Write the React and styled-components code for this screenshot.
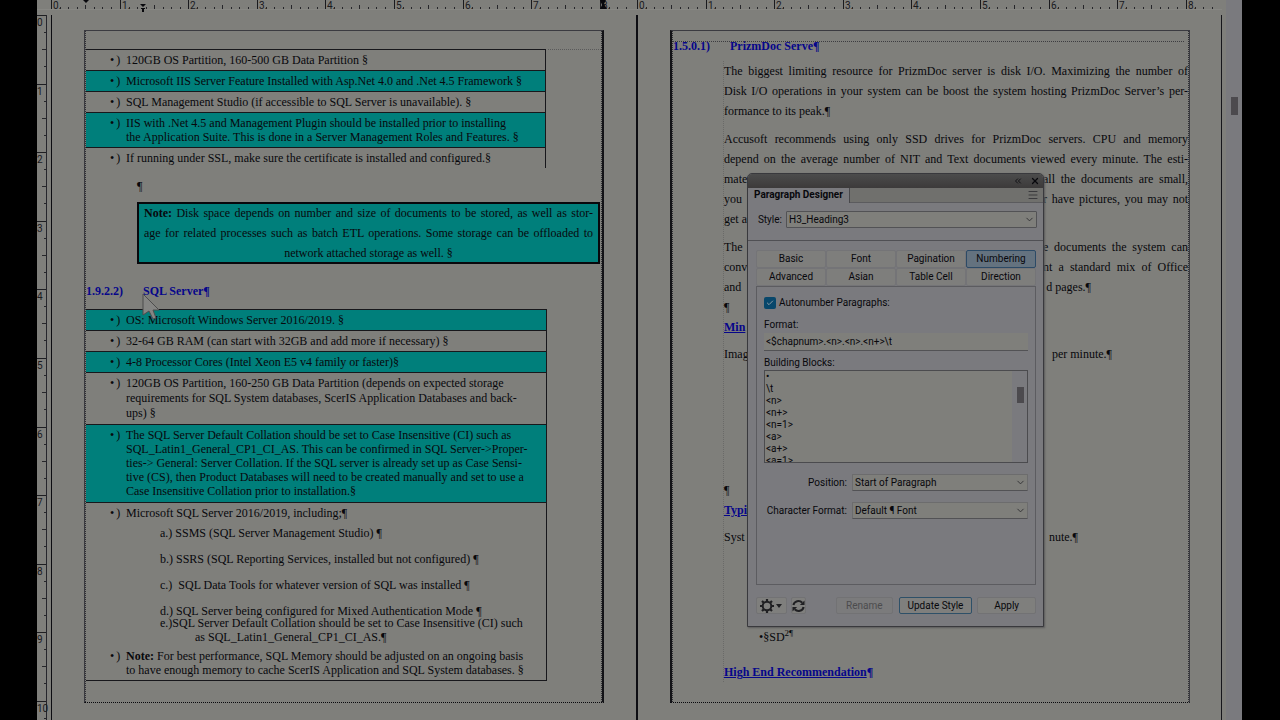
import React from 'react'
import styled, { createGlobalStyle, css } from 'styled-components'
import { ChevronDown, ChevronsLeft, X, Menu, Check } from 'lucide-react'

const ink = '#08080c'
const paper = '#7f7f7b'
const panel = '#7a7a7e'
const teal = '#007f7b'
const link = '#06068a'
const serif = '"Liberation Serif", serif'
const sans = 'Roboto, "Liberation Sans", sans-serif'

const GlobalStyle = createGlobalStyle`
  * {
    box-sizing: border-box;
  }
  body {
    margin: 0;
    background: #000;
    color: ${ink};
    font-family: ${serif};
    font-size: 12px;
  }
  ul, ol, p, h2 {
    margin: 0;
    padding: 0;
    list-style: none;
  }
`

const Workspace = styled.div`
  display: flex;
  height: 100vh;
  margin: 0 38px 0 37px;
  background: ${paper};
  overflow: hidden;
`

const Main = styled.main`
  flex: 1;
  min-width: 0;
  display: flex;
  flex-direction: column;
`

const RulerBar = styled.div`
  display: flex;
  height: 10px;
  margin-bottom: 5px;
  padding-left: 14px;
  border-bottom: 1px solid #878783;
`

const RulerPart = styled.svg`
  flex: 1;
  min-width: 0;
  height: 9px;
  overflow: visible;
  font-family: ${sans};
  font-size: 10px;
`

const Spread = styled.div`
  flex: 1;
  min-height: 0;
  display: flex;
`

const SideRuler = styled.svg`
  flex: none;
  width: 10px;
  height: 100%;
  margin-right: 4px;
  border-right: 1px solid #25252b;
  overflow: visible;
  font-family: ${sans};
  font-size: 10px;
`

const Page = styled.section`
  position: relative;
  flex: 1;
  min-width: 0;
  display: flex;
  flex-direction: column;
  padding: 15px 32px 17px;
  border-left: ${(props) => (props.$second ? 2 : 1)}px solid #0d0d12;

  &:last-child {
    padding-right: 31px;
    border-right: 1px solid #16161b;
  }
`

const Frame = styled.div`
  flex: 1;
  min-height: 0;
  border: 1px solid #3a3a40;
  border-right: ${(props) => (props.$second ? 1 : 2)}px solid
    ${(props) => (props.$second ? '#3a3a40' : '#121216')};
  border-left: ${(props) => (props.$second ? 2 : 1)}px solid
    ${(props) => (props.$second ? '#121216' : '#3a3a40')};
  border-bottom: 1px dotted ${ink};
`

const Flow = styled.div`
  position: relative;
  height: 100%;
  border-left: 1px dotted #303034;
  border-right: 1px dotted #303034;
`

const FirstFlow = styled(Flow)`
  padding-top: 18px;

  &::before {
    content: '';
    position: absolute;
    top: 18px;
    left: 462px;
    right: 0;
    border-top: 1px dotted #5a5a5a;
  }
`

const SecondFlow = styled(Flow)`
  padding-top: 5px;

  &::before {
    content: '';
    position: absolute;
    top: 10px;
    left: 0;
    right: 4px;
    border-top: 1px dotted #3c3c40;
  }
`

const Rows = styled.ul`
  width: 461px;
  border: 1px solid #17171b;
  border-left: 0;
  border-top: 0;
  ${(props) =>
    props.$open &&
    css`
      width: 460px;
      border-bottom: 0;
    `}
`

const Row = styled.li`
  display: flex;
  padding: 3px 0 ${(props) => props.$bottom ?? 3}px 24px;
  border-top: 1px solid #17171b;
  background: ${(props) => (props.$filled ? teal : 'transparent')};
  line-height: ${(props) => props.$leading || 14}px;
  white-space: nowrap;
`

const Bullet = styled.span`
  flex: none;
  display: flex;
  gap: 2px;
  width: 16px;
`

const SubList = styled.ol`
  display: grid;
  gap: 12px;
  margin-top: 6px;
  padding-left: 34px;
`

const LastItem = styled.li`
  margin-top: -14px;
`

const Hanging = styled.span`
  display: block;
  padding-left: 35px;
`

const NoteRow = styled(Row)`
  border-top: 0;
  padding-top: 5px;
`

const EmptyLine = styled.p`
  margin: 8px 0 6px 51px;
  line-height: 20px;
`

const NoteBox = styled.p`
  margin: 0 1px 0 51px;
  padding: 1px 7px;
  background: ${teal};
  box-shadow: inset 0 0 0 2px ${ink};
  line-height: 20px;
  text-align: center;
  white-space: nowrap;
`

const Heading = styled.h2`
  display: flex;
  margin: ${(props) => props.$space || '0'};
  color: ${link};
  font-size: 12px;
  line-height: 20px;
  font-weight: bold;
`

const HeadingNumber = styled.span`
  width: 57px;
`

const Body = styled.div`
  margin-left: 50px;
  border-left: 1px dotted #6a6a68;
  line-height: 20px;
`

const Paragraph = styled.p`
  margin-top: ${(props) => props.$gap || 0}px;
`

const Line = styled.span`
  display: block;
  white-space: nowrap;
  text-align-last: ${(props) => (props.$last ? 'left' : 'justify')};
`

const SplitLine = styled.span`
  display: flex;
  justify-content: space-between;
  margin-right: ${(props) => props.$short || 0}px;
  white-space: nowrap;

  span:last-child {
    ${(props) =>
      !props.$short &&
      css`
        width: 145px;
        text-align-last: justify;
      `}
  }
`

const SubHeading = styled.h2`
  margin-top: ${(props) => props.$gap || 0}px;
  color: ${link};
  font-size: 12px;
  line-height: 20px;

  u {
    text-decoration-thickness: 1px;
  }
`

const Indented = styled(Paragraph)`
  padding-left: 35px;

  sup {
    font-size: 9px;
    line-height: 1;
  }
`

const ScrollTrack = styled.div`
  flex: none;
  width: 16px;
  margin-left: 4px;
  padding: 97px 4px 0 5px;
  background: ${panel};
`

const ScrollThumb = styled.div`
  height: ${(props) => props.$size}px;
  background: #4c4a4e;
`

const Pointer = styled.svg`
  position: absolute;
  left: 90px;
  top: 278px;
  width: 18px;
  height: 28px;
`

const Dialog = styled.form`
  position: absolute;
  left: 109px;
  top: 158px;
  width: 297px;
  background: ${panel};
  border: 1px solid #39393d;
  border-radius: 5px 5px 0 0;
  box-shadow: 1px 1px 2px #5c5c5c;
  font-family: ${sans};
  font-size: 10px;
  line-height: 14px;

  input, select, button {
    font: inherit;
    color: inherit;
  }
`

const TitleBar = styled.div`
  display: flex;
  justify-content: flex-end;
  align-items: center;
  gap: 7px;
  height: 14px;
  padding-right: 3px;
  border-radius: 4px 4px 0 0;
  background: linear-gradient(#4c4c4c, #3c3a3a);
`

const PlainButton = styled.button`
  display: flex;
  padding: 0;
  border: 0;
  background: none;
`

const PanelTabs = styled.div`
  display: flex;
  align-items: center;
  justify-content: space-between;
  height: 15px;
  padding-right: 4px;
  background: #70706d;
  border-bottom: 1px solid #5b5b5e;
`

const PanelTab = styled.strong`
  height: 15px;
  padding: 0 6px;
  border-right: 1px solid #48484b;
  background: ${panel};
  line-height: 13px;
`

const StyleRow = styled.div`
  display: grid;
  grid-template-columns: 34px 1fr;
  align-items: center;
  gap: 4px;
  padding: 8px 6px 12px 0;
  border-bottom: 1px solid #505054;

  label {
    text-align: right;
  }
`

const SelectBox = styled.span`
  position: relative;
  display: block;

  select {
    display: block;
    width: 100%;
    height: 17px;
    padding: 0 2px;
    appearance: none;
    border: 1px solid ${(props) => (props.$strong ? '#525255' : '#6c6c6d')};
    border-bottom-color: #525255;
    border-radius: 1px;
    background: ${paper};
  }

  svg {
    position: absolute;
    right: 2px;
    top: 3px;
    color: #303033;
  }
`

const Content = styled.div`
  padding: 9px 7px 12px 8px;
`

const Tabs = styled.div`
  display: grid;
  grid-template-columns: repeat(4, 1fr);
`

const Tab = styled.button`
  height: 18px;
  padding: 0;
  border: 1px solid #747477;
  border-radius: 2px;
  background: ${(props) => (props.$active ? '#64727f' : '#7e7e7c')};
  ${(props) => props.$active && 'border-color: #2c4a66;'}
`

const Sheet = styled.div`
  display: flex;
  flex-direction: column;
  height: 299px;
  padding: 9px 7px 0;
  border: 1px solid #5c5c60;
`

const CheckLabel = styled.label`
  display: flex;
  align-items: center;
  gap: 3px;
`

const CheckHolder = styled.span`
  position: relative;
  display: flex;

  input {
    width: 12px;
    height: 12px;
    margin: 0;
    appearance: none;
    border-radius: 2px;
    background: #08476b;
  }

  svg {
    position: absolute;
    left: 2px;
    top: 2px;
    color: #8c9aa3;
  }
`

const FieldLabel = styled.label`
  margin-top: ${(props) => props.$gap}px;
`

const TextInput = styled.input`
  height: 18px;
  margin-top: 1px;
  padding: 0 2px;
  border: 0;
  border-bottom: 1px solid #525255;
  background: ${paper};
`

const ListBox = styled.div`
  display: flex;
  height: 93px;
  border: 1px solid #4b4b4e;
  background: ${paper};
  overflow: hidden;

  ul {
    flex: 1;
    padding-left: 1px;
    line-height: 12px;
  }
`

const ListTrack = styled.div`
  width: 15px;
  padding: 16px 3px 0 5px;
  background: ${panel};
`

const Fields = styled.div`
  display: grid;
  grid-template-columns: 83px 1fr;
  gap: 11px 5px;
  align-items: center;
  margin-top: 11px;

  label {
    text-align: right;
    white-space: nowrap;
  }
`

const Footer = styled.div`
  display: flex;
  align-items: center;
  padding-top: 12px;
`

const Button = styled.button`
  display: flex;
  justify-content: center;
  align-items: center;
  width: ${(props) => props.$width}px;
  height: 17px;
  margin-left: ${(props) => props.$gap || 0}px;
  padding: 0;
  border: 1px solid ${(props) => (props.$primary ? '#2e5068' : '#727274')};
  border-radius: 2px;
  background: ${(props) => (props.disabled ? '#7b7b7c' : '#7f7f7d')};

  && {
    color: ${(props) => (props.disabled ? '#4c4c4e' : ink)};
  }
`

const INCH = 68.6
const inches = [0, 1, 2, 3, 4, 5, 6, 7, 8, 9, 10]
const eighths = [1, 2, 3, 4, 5, 6, 7]

function TopRuler({ markers }) {
  return (
    <RulerPart aria-hidden="true">
      {inches.slice(0, 9).map((n) => {
        const x = Math.round(n * INCH)
        const ticks = n === 8 ? eighths.slice(0, 3) : eighths
        return (
          <g key={n}>
            <rect x={x} y="0" width="1" height="9" fill="#1a1a1e" />
            <text x={x + 2} y="9" fill="#1a1a1e">
              {n}.
            </text>
            {ticks.map((e) => (
              <rect
                key={e}
                x={Math.round(x + (e * INCH) / 8)}
                y={e === 4 ? 5 : 7}
                width="1"
                height={e === 4 ? 4 : 2}
                fill="#26262a"
              />
            ))}
          </g>
        )
      })}
      {markers && (
        <g fill={ink}>
          <path d="M32 0h6l-3 3z" />
          <path d="M89 4h6l-3 3zM90 8h4v1h-1v3h-2v-3h-1z" />
          <path d="M549 0h6l-2 4 3 5h-7l2-4z" />
        </g>
      )}
    </RulerPart>
  )
}

function LeftRuler() {
  return (
    <SideRuler aria-hidden="true">
      {inches.map((n) => {
        const y = Math.round(n * INCH)
        return (
          <g key={n}>
            <rect x="0" y={y} width="9" height="1" fill="#1e1e22" />
            <text x="0" y={y + 11} fill="#1a1a1e">
              {n}
            </text>
            {[1, 2, 3].map((q) => (
              <rect
                key={q}
                x={q === 2 ? 5 : 7}
                y={Math.round(y + (q * INCH) / 4)}
                width={q === 2 ? 4 : 2}
                height="1"
                fill="#26262a"
              />
            ))}
          </g>
        )
      })}
    </SideRuler>
  )
}

function Marker() {
  return (
    <Bullet>
      <span>•</span>
      <span>)</span>
    </Bullet>
  )
}

function BulletRow({ lines, ...rest }) {
  return (
    <Row {...rest}>
      <Marker />
      <span>
        {lines.map((line) => (
          <div key={line}>{line}</div>
        ))}
      </span>
    </Row>
  )
}

function Dropdown({ id, value, strong }) {
  return (
    <SelectBox $strong={strong}>
      <select id={id} defaultValue={value}>
        <option>{value}</option>
      </select>
      <ChevronDown size={11} strokeWidth={2} />
    </SelectBox>
  )
}

function GearIcon() {
  return (
    <svg width="16" height="16" viewBox="0 0 16 16">
      <g stroke="#202023" fill="none">
        <circle cx="8" cy="8" r="4.3" strokeWidth="2" />
        <path
          d="M8 1v2.500M8 12.500V15M1 8h2.500M12.500 8H15M3 3l1.800 1.800M11.200 11.200 13 13M13 3l-1.800 1.800M4.800 11.200 3 13"
          strokeWidth="2.200"
        />
      </g>
    </svg>
  )
}

function RefreshIcon() {
  return (
    <svg width="14" height="14" viewBox="0 0 14 14">
      <g fill="none" stroke="#202023" strokeWidth="2.200">
        <path d="M1.500 6A5.500 5.500 0 0 1 11 3.500" />
        <path d="M12.500 8A5.500 5.500 0 0 1 3 10.500" />
      </g>
      <path d="M13.500 1v5h-5zM.5 13V8h5z" fill="#202023" />
    </svg>
  )
}

const tabs = [
  'Basic',
  'Font',
  'Pagination',
  'Numbering',
  'Advanced',
  'Asian',
  'Table Cell',
  'Direction',
]
const blocks = ['•', '\\t', '<n>', '<n+>', '<n=1>', '<a>', '<a+>', '<a=1>']

function ParagraphDesigner() {
  return (
    <Dialog>
      <TitleBar>
        <PlainButton type="button" aria-label="Collapse">
          <ChevronsLeft size={10} />
        </PlainButton>
        <PlainButton type="button" aria-label="Close">
          <X size={10} strokeWidth={3} />
        </PlainButton>
      </TitleBar>
      <PanelTabs>
        <PanelTab>Paragraph Designer</PanelTab>
        <PlainButton type="button" aria-label="Menu">
          <Menu size={12} color="#3a3a3d" />
        </PlainButton>
      </PanelTabs>
      <StyleRow>
        <label htmlFor="style">Style:</label>
        <Dropdown id="style" value="H3_Heading3" strong />
      </StyleRow>
      <Content>
        <Tabs>
          {tabs.map((tab) => (
            <Tab key={tab} type="button" $active={tab === 'Numbering'}>
              {tab}
            </Tab>
          ))}
        </Tabs>
        <Sheet>
          <CheckLabel>
            <CheckHolder>
              <input type="checkbox" defaultChecked />
              <Check size={8} strokeWidth={3} />
            </CheckHolder>
            Autonumber Paragraphs:
          </CheckLabel>
          <FieldLabel htmlFor="format" $gap={8}>
            Format:
          </FieldLabel>
          <TextInput id="format" defaultValue="<$chapnum>.<n>.<n>.<n+>\t" />
          <FieldLabel as="span" id="blocks" $gap={5}>
            Building Blocks:
          </FieldLabel>
          <ListBox>
            <ul role="listbox" aria-labelledby="blocks">
              {blocks.map((block) => (
                <li key={block} role="option" aria-selected="false">
                  {block}
                </li>
              ))}
            </ul>
            <ListTrack>
              <ScrollThumb $size={16} />
            </ListTrack>
          </ListBox>
          <Fields>
            <label htmlFor="position">Position:</label>
            <Dropdown id="position" value="Start of Paragraph" />
            <label htmlFor="charformat">Character Format:</label>
            <Dropdown id="charformat" value="Default ¶ Font" />
          </Fields>
        </Sheet>
        <Footer>
          <Button type="button" $width={31} aria-label="Options">
            <GearIcon />
            <svg width="8" height="5" viewBox="0 0 8 5">
              <path d="M1 1h6L4 5z" fill="#202023" />
            </svg>
          </Button>
          <Button type="button" $width={15} $gap={4} aria-label="Refresh">
            <RefreshIcon />
          </Button>
          <Button type="button" $width={57} $gap={30} disabled>
            Rename
          </Button>
          <Button type="button" $width={74} $gap={6} $primary>
            Update Style
          </Button>
          <Button type="button" $width={59} $gap={5}>
            Apply
          </Button>
        </Footer>
      </Content>
    </Dialog>
  )
}

function FirstPage() {
  return (
    <Page>
      <Frame>
        <FirstFlow>
          <Rows $open>
            <BulletRow lines={['120GB OS Partition, 160-500 GB Data Partition §']} />
            <BulletRow
              $filled
              lines={[
                'Microsoft IIS Server Feature Installed with Asp.Net 4.0 and .Net 4.5 Framework §',
              ]}
            />
            <BulletRow
              lines={['SQL Management Studio (if accessible to SQL Server is unavailable). §']}
            />
            <BulletRow
              $filled
              lines={[
                'IIS with .Net 4.5 and Management Plugin should be installed prior to installing',
                'the Application Suite. This is done in a Server Management Roles and Features. §',
              ]}
            />
            <BulletRow
              lines={[
                'If running under SSL, make sure the certificate is installed and configured.§',
              ]}
            />
          </Rows>
          <EmptyLine>¶</EmptyLine>
          <NoteBox>
            <Line>
              <b>Note:</b> Disk space depends on number and size of documents to be stored, as
              well as stor-
            </Line>
            <Line>
              age for related processes such as batch ETL operations. Some storage can be
              offloaded to
            </Line>
            network attached storage as well. §
          </NoteBox>
          <Heading $space="17px 0 8px">
            <HeadingNumber>1.9.2.2)</HeadingNumber>
            SQL Server¶
          </Heading>
          <Rows>
            <BulletRow $filled lines={['OS: Microsoft Windows Server 2016/2019. §']} />
            <BulletRow
              lines={['32-64 GB RAM (can start with 32GB and add more if necessary) §']}
            />
            <BulletRow
              $filled
              lines={['4-8 Processor Cores (Intel Xeon E5 v4 family or faster)§']}
            />
            <BulletRow
              $leading={15}
              lines={[
                '120GB OS Partition, 160-250 GB Data Partition (depends on expected storage',
                'requirements for SQL System databases, ScerIS Application Databases and back-',
                'ups) §',
              ]}
            />
            <BulletRow
              $filled
              $bottom={4}
              lines={[
                'The SQL Server Default Collation should be set to Case Insensitive (CI) such as',
                'SQL_Latin1_General_CP1_CI_AS. This can be confirmed in SQL Server->Proper-',
                'ties-> General: Server Collation. If the SQL server is already set up as Case Sensi-',
                'tive (CS), then Product Databases will need to be created manually and set to use a',
                'Case Insensitive Collation prior to installation.§',
              ]}
            />
            <Row $bottom={0}>
              <Marker />
              <div>
                Microsoft SQL Server 2016/2019, including;¶
                <SubList>
                  <li>a.) SSMS (SQL Server Management Studio) ¶</li>
                  <li>b.) SSRS (SQL Reporting Services, installed but not configured) ¶</li>
                  <li>c.)&nbsp; SQL Data Tools for whatever version of SQL was installed ¶</li>
                  <li>d.) SQL Server being configured for Mixed Authentication Mode ¶</li>
                  <LastItem>
                    e.)SQL Server Default Collation should be set to Case Insensitive (CI) such
                    <Hanging>as SQL_Latin1_General_CP1_CI_AS.¶</Hanging>
                  </LastItem>
                </SubList>
              </div>
            </Row>
            <NoteRow>
              <Marker />
              <span>
                <b>Note:</b> For best performance, SQL Memory should be adjusted on an ongoing
                basis
                <br />
                to have enough memory to cache ScerIS Application and SQL System databases. §
              </span>
            </NoteRow>
          </Rows>
        </FirstFlow>
      </Frame>
      <Pointer viewBox="0 0 18 28" aria-hidden="true">
        <path
          d="M1 1v21l6-4 4 8 3-1-3-8h6z"
          fill="#858583"
          stroke="#4d4d4d"
          strokeWidth="1"
        />
      </Pointer>
    </Page>
  )
}

function SecondPage() {
  return (
    <Page $second>
      <Frame $second>
        <SecondFlow>
          <Heading $space="0 0 5px">
            <HeadingNumber>1.5.0.1)</HeadingNumber>
            PrizmDoc Serve¶
          </Heading>
          <Body>
            <Paragraph>
              <Line>
                The biggest limiting resource for PrizmDoc server is disk I/O. Maximizing the
                number of
              </Line>
              <Line>
                Disk I/O operations in your system can be boost the system hosting PrizmDoc
                Server’s per-
              </Line>
              <Line $last>formance to its peak.¶</Line>
            </Paragraph>
            <Paragraph $gap={8}>
              <Line>
                Accusoft recommends using only SSD drives for PrizmDoc servers. CPU and memory
              </Line>
              <Line>
                depend on the average number of NIT and Text documents viewed every minute. The
                esti-
              </Line>
              <SplitLine>
                <span>mate</span>
                <span>all the documents are small,</span>
              </SplitLine>
              <SplitLine>
                <span>you</span>
                <span>r have pictures, you may not</span>
              </SplitLine>
              <Line $last>get a</Line>
            </Paragraph>
            <Paragraph $gap={8}>
              <SplitLine>
                <span>The</span>
                <span>e documents the system can</span>
              </SplitLine>
              <SplitLine>
                <span>conv</span>
                <span>nt a standard mix of Office</span>
              </SplitLine>
              <SplitLine $short={97}>
                <span>and</span>
                <span>d pages.¶</span>
              </SplitLine>
            </Paragraph>
            <Paragraph>¶</Paragraph>
            <SubHeading>
              <u>Min</u>
            </SubHeading>
            <Paragraph $gap={7}>
              <SplitLine $short={76}>
                <span>Imag</span>
                <span>per minute.¶</span>
              </SplitLine>
            </Paragraph>
            <Paragraph $gap={116}>¶</Paragraph>
            <SubHeading>
              <u>Typi</u>
            </SubHeading>
            <Paragraph $gap={7}>
              <SplitLine $short={110}>
                <span>Syst</span>
                <span>nute.¶</span>
              </SplitLine>
            </Paragraph>
            <Indented $gap={80}>
              •§SD<sup>2¶</sup>
            </Indented>
            <SubHeading $gap={15}>
              <u>High End Recommendation</u>¶
            </SubHeading>
          </Body>
        </SecondFlow>
      </Frame>
      <ParagraphDesigner />
    </Page>
  )
}

function App() {
  return (
    <React.Fragment>
      <GlobalStyle />
      <Workspace>
        <Main>
          <RulerBar>
            <TopRuler markers />
            <TopRuler />
          </RulerBar>
          <Spread>
            <LeftRuler />
            <FirstPage />
            <SecondPage />
          </Spread>
        </Main>
        <ScrollTrack>
          <ScrollThumb $size={18} />
        </ScrollTrack>
      </Workspace>
    </React.Fragment>
  )
}

export default App
